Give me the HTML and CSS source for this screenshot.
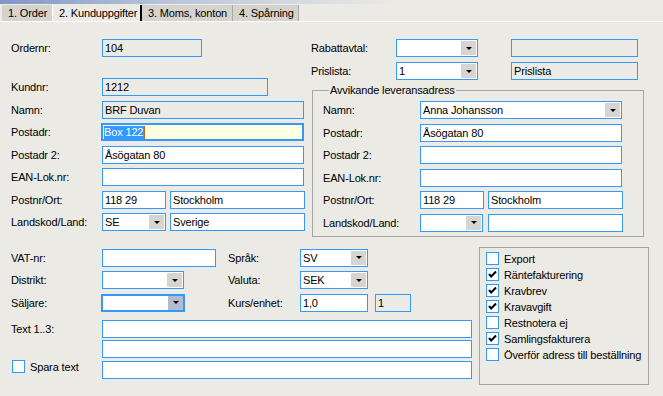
FILE: index.html
```html
<!DOCTYPE html>
<html lang="sv">
<head>
    <meta charset="UTF-8">
    <title>Kunduppgifter</title>
    <link rel="stylesheet" href="styles.css">
</head>
<body>
    <div class="tabstrip">
        <div class="tab t1">1. Order</div>
        <div class="tab t2 active">2. Kunduppgifter</div>
        <div class="tab t3">3. Moms, konton</div>
        <div class="tab t4">4. Spårning</div>
    </div>

    <div class="panel">
        <div class="top">
            <div class="left stack">
                <div class="row"><span class="lbl">Ordernr:</span><div class="box ro w100">104</div></div>
                <div class="row kund"><span class="lbl">Kundnr:</span><div class="box ro w166">1212</div></div>
                <div class="row"><span class="lbl">Namn:</span><div class="box ro w202">BRF Duvan</div></div>
                <div class="row"><span class="lbl">Postadr:</span><div class="box focus w203"><span class="selected">Box 122</span></div></div>
                <div class="row"><span class="lbl">Postadr 2:</span><div class="box w202">Åsögatan 80</div></div>
                <div class="row"><span class="lbl">EAN-Lok.nr:</span><div class="box w202"></div></div>
                <div class="row"><span class="lbl">Postnr/Ort:</span><div class="box w64">118 29</div><div class="box w135 ml4">Stockholm</div></div>
                <div class="row"><span class="lbl">Landskod/Land:</span><div class="box combo w64">SE<span class="drop"></span></div><div class="box w135 ml4">Sverige</div></div>
            </div>

            <div class="right">
                <div class="row"><span class="lbl lbl-r">Rabattavtal:</span><div class="box combo w82"><span></span><span class="drop"></span></div><div class="box ro w127 ml33"></div></div>
                <div class="row prislista"><span class="lbl lbl-r">Prislista:</span><div class="box combo w82">1<span class="drop"></span></div><div class="box ro w127 ml33">Prislista</div></div>

                <fieldset class="group">
                    <legend>Avvikande leveransadress</legend>
                    <div class="stack">
                        <div class="row"><span class="lbl lbl-g">Namn:</span><div class="box combo w202">Anna Johansson<span class="drop"></span></div></div>
                        <div class="row"><span class="lbl lbl-g">Postadr:</span><div class="box w202">Åsögatan 80</div></div>
                        <div class="row"><span class="lbl lbl-g">Postadr 2:</span><div class="box w202"></div></div>
                        <div class="row"><span class="lbl lbl-g">EAN-Lok.nr:</span><div class="box w202"></div></div>
                        <div class="row"><span class="lbl lbl-g">Postnr/Ort:</span><div class="box w64">118 29</div><div class="box w135 ml4">Stockholm</div></div>
                        <div class="row"><span class="lbl lbl-g">Landskod/Land:</span><div class="box combo w63"><span></span><span class="drop"></span></div><div class="box w135 ml5">&nbsp;</div></div>
                    </div>
                </fieldset>
            </div>
        </div>

        <div class="bottom">
            <div class="fields">
                <div class="grid3">
                    <span class="lbl">VAT-nr:</span>
                    <div class="box w114"></div>
                    <span class="lbl">Språk:</span>
                    <div class="box combo w68">SV<span class="drop"></span></div>

                    <span class="lbl">Distrikt:</span>
                    <div class="box combo w82"><span></span><span class="drop"></span></div>
                    <span class="lbl">Valuta:</span>
                    <div class="box combo w68">SEK<span class="drop"></span></div>

                    <span class="lbl">Säljare:</span>
                    <div class="box combo focus w84"><span></span><span class="drop hot"></span></div>
                    <span class="lbl">Kurs/enhet:</span>
                    <div class="row"><div class="box w68">1,0</div><div class="box ro w36 ml7">1</div></div>
                </div>

                <div class="texts">
                    <span class="lbl">Text 1..3:</span>
                    <div class="box w370"></div>
                    <span></span>
                    <div class="box w370"></div>
                    <label class="check spara"><span class="cb"></span>Spara text</label>
                    <div class="box w370"></div>
                </div>
            </div>

            <div class="options">
                <label class="check"><span class="cb"></span>Export</label>
                <label class="check"><span class="cb on"><svg width="11" height="11" viewBox="0 0 11 11"><polyline points="2,5 4.2,7.5 9,2.5" /></svg></span>Räntefakturering</label>
                <label class="check"><span class="cb on"><svg width="11" height="11" viewBox="0 0 11 11"><polyline points="2,5 4.2,7.5 9,2.5" /></svg></span>Kravbrev</label>
                <label class="check"><span class="cb on"><svg width="11" height="11" viewBox="0 0 11 11"><polyline points="2,5 4.2,7.5 9,2.5" /></svg></span>Kravavgift</label>
                <label class="check"><span class="cb"></span>Restnotera ej</label>
                <label class="check"><span class="cb on"><svg width="11" height="11" viewBox="0 0 11 11"><polyline points="2,5 4.2,7.5 9,2.5" /></svg></span>Samlingsfakturera</label>
                <label class="check"><span class="cb"></span>Överför adress till beställning</label>
            </div>
        </div>
    </div>
</body>
</html>
```

FILE: styles.css
```css
*{
    margin: 0;
    padding: 0;
    box-sizing: border-box;
}
body{
    width: 663px;
    height: 396px;
    overflow: hidden;
    background: #ebeae5;
    font-family: "Liberation Sans", Arial, sans-serif;
    font-size: 11px;
    letter-spacing: -0.15px;
    color: #000;
}

/* tabs */
.tabstrip{
    display: flex;
    height: 22px;
    padding: 5px 0 0 2px;
    border-bottom: 1px solid #fff;
    background: linear-gradient(90deg, #7f97c6 0, #b9c4da 25%, #ebeae5 60%) no-repeat;
    background-size: 100% 4px;
}
.tab{
    height: 16px;
    line-height: 16px;
    padding-left: 6px;
    background: #d5d3cc;
    white-space: nowrap;
}
.t1{ width: 50px; }
.t2{ width: 90px; }
.t3{ width: 91px; border-right: 1px solid #a8a8a8; }
.t4{ width: 66px; border-right: 1px solid #a8a8a8; }
.tab.active{
    background: #ebeae5;
    border-left: 1px solid #fff;
    border-right: 2px solid #000;
}

/* panel */
.panel{
    padding: 17px 0 0 11px;
}
.top{
    display: flex;
}
.left{
    width: 300px;
}
.stack{
    display: flex;
    flex-direction: column;
    gap: 4.5px;
}
.row{
    display: flex;
    align-items: center;
    height: 18px;
}
.row.kund{
    margin-top: 16.5px;
}
.row.prislista{
    margin-top: 5px;
}
.lbl{
    width: 91px;
    line-height: 18px;
    white-space: nowrap;
}
.lbl-r{ width: 85px; }
.lbl-g{ width: 97px; }

/* inputs */
.box{
    height: 18px;
    border: 1px solid #3399ff;
    background: #fff;
    padding-left: 2px;
    line-height: 16px;
    white-space: nowrap;
    overflow: hidden;
    flex: none;
}
.box.ro{
    background: transparent;
}
.box.focus{
    border-width: 2px;
    margin-left: -1px;
    padding-left: 1px;
    line-height: 14px;
    background: #ffffe1;
}
.selected{
    display: inline-block;
    background: #3399ff;
    color: #fff;
    border-right: 1px solid #c0641e;
    line-height: 13px;
    padding-right: 1px;
}
.combo{
    display: flex;
    justify-content: space-between;
    align-items: center;
}
.combo.focus{
    background: #fff;
}
.drop{
    width: 15px;
    height: 14px;
    margin-right: 1px;
    background: #d6d5d2;
    display: flex;
    align-items: center;
    justify-content: center;
}
.drop::after{
    content: "";
    border-top: 3px solid #000;
    border-left: 3px solid transparent;
    border-right: 3px solid transparent;
}
.combo.focus .drop{
    height: 14px;
    margin-right: 0;
}
.drop.hot{
    background: #b4bad2;
}

.w36{ width: 36px; }
.w63{ width: 63px; }
.w64{ width: 64px; }
.w68{ width: 68px; }
.w82{ width: 82px; }
.w84{ width: 84px; }
.w100{ width: 100px; }
.w114{ width: 114px; }
.w127{ width: 127px; }
.w135{ width: 135px; }
.w166{ width: 166px; }
.w202{ width: 202px; }
.w203{ width: 203px; }
.w370{ width: 370px; }
.ml4{ margin-left: 4px; }
.ml5{ margin-left: 5px; }
.ml7{ margin-left: 7px; }
.ml33{ margin-left: 33px; }

/* group box */
.group{
    width: 332px;
    margin: 4px 0 0 1px;
    border: 1px solid #a5a5a5;
    padding: 4px 0 4px 10px;
}
.group legend{
    margin-left: 6px;
    padding: 0 1px;
    line-height: 13px;
}

/* bottom */
.bottom{
    display: flex;
    gap: 7px;
    margin-top: 10px;
}
.fields{
    width: 461px;
    padding-top: 2px;
}
.grid3{
    display: grid;
    grid-template-columns: 91px 126px 72px auto;
    row-gap: 4.5px;
    align-items: center;
}
.texts{
    display: grid;
    grid-template-columns: 91px 370px;
    row-gap: 2.5px;
    margin-top: 8px;
    align-items: center;
}
.check{
    display: flex;
    align-items: center;
    gap: 5px;
    height: 16px;
    white-space: nowrap;
}
.cb{
    width: 13px;
    height: 13px;
    border: 1px solid #3399ff;
    background: #fff;
    display: flex;
    flex: none;
}
.cb polyline{
    fill: none;
    stroke: #000;
    stroke-width: 2;
}
.check.spara{
    margin: -6px 0 0 1px;
}
.options{
    width: 170px;
    height: 138px;
    border: 1px solid #a5a5a5;
    padding: 3px 0 0 6px;
}
```
